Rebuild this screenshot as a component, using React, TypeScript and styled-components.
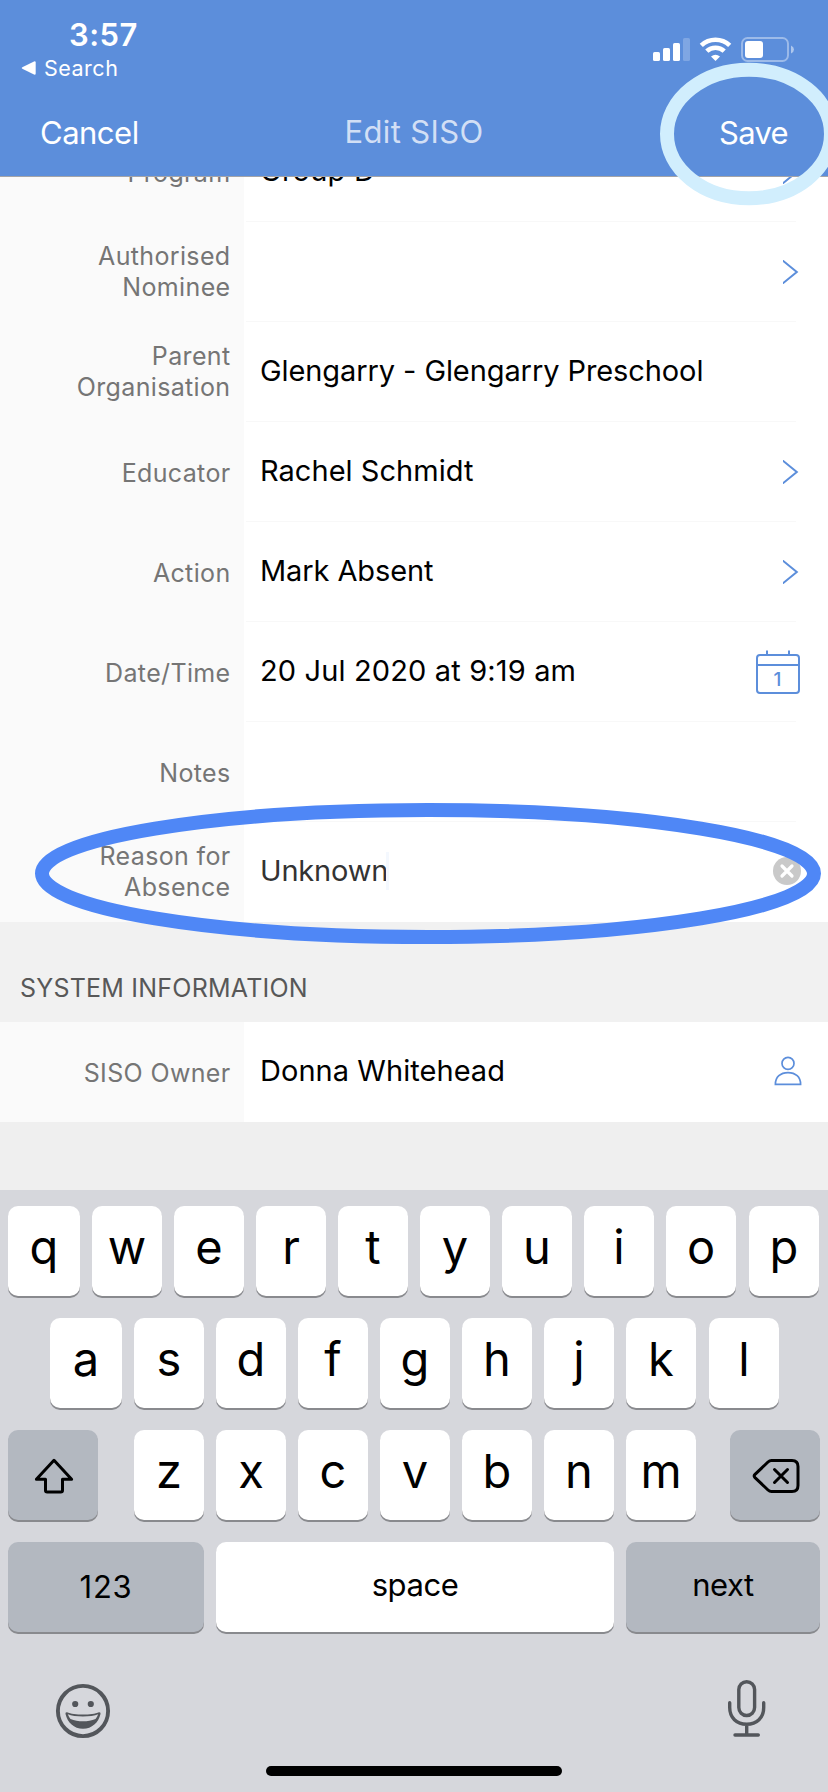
import React from 'react';
import styled, { createGlobalStyle, css } from 'styled-components';

const BLUE = '#5c8edb';

const GlobalStyle = createGlobalStyle`
  *, *::before, *::after { box-sizing: border-box; }
  body { margin: 0; }
  svg { display: block; flex: none; }
`;

const Screen = styled.div`
  position: relative;
  display: flex;
  flex-direction: column;
  width: 828px;
  height: 1792px;
  overflow: hidden;
  background: #efefef;
  font-family: Inter, "Liberation Sans", sans-serif;
  color: #000;
`;

/* Header */

const Header = styled.header`
  height: 177px;
  flex: none;
  display: flex;
  flex-direction: column;
  background: ${BLUE};
  border-bottom: 1px solid #a3a4a8;
  color: #fff;
`;

const StatusBar = styled.div`
  display: flex;
  justify-content: space-between;
  height: 90px;
  padding: 19px 32px 0 21px;
`;

const StatusLeft = styled.div`
  display: flex;
  flex-direction: column;
  gap: 3px;
`;

const Clock = styled.div`
  padding-left: 48px;
  font-size: 31px;
  font-weight: 570;
  line-height: 32px;
  letter-spacing: 0.5px;
`;

const BackLink = styled.div`
  display: flex;
  align-items: center;
  gap: 8px;
  font-size: 21.5px;
  line-height: 28px;
  letter-spacing: 0.5px;
`;

const StatusIcons = styled.svg`
  margin-top: 15px;
`;

const NavBar = styled.nav`
  display: grid;
  grid-template-columns: 1fr auto 1fr;
  align-items: center;
  flex: 1;
  padding: 0 40px;
  font-size: 31px;
  line-height: 38px;
`;

const NavAction = styled.span<{ $end?: boolean }>`
  justify-self: ${(p) => (p.$end ? 'end' : 'start')};
  letter-spacing: ${(p) => (p.$end ? '-0.7px' : '-0.5px')};
`;

const NavTitle = styled.span`
  padding-bottom: 2px;
  letter-spacing: 0.36px;
  color: #d2dff5;
`;

/* Form */

const Form = styled.main`
  flex: none;
  height: 1013px;
  overflow: hidden;
`;

const Scroller = styled.div`
  margin-top: -55px;
`;

const FieldRow = styled.div`
  display: grid;
  grid-template: 99px 1px / 244px 1fr;
  background: #fff;
`;

const FieldLabel = styled.div<{ $double?: boolean }>`
  grid-row: 1 / 3;
  display: flex;
  align-items: center;
  justify-content: flex-end;
  padding: ${(p) => (p.$double ? 0 : 3)}px 13.5px 0 0;
  background: #fafafa;
  color: #757575;
  font-size: 25px;
  line-height: 31px;
  letter-spacing: 0.35px;
  text-align: right;
  white-space: pre-line;
`;

const FieldValue = styled.div<{ $muted?: boolean }>`
  display: flex;
  align-items: center;
  justify-content: space-between;
  padding: 0 26px 0 16px;
  font-size: 29px;
  white-space: nowrap;
  color: ${(p) => (p.$muted ? '#333' : '#000')};
`;

const ValueText = styled.span<{ $spacing?: number }>`
  display: flex;
  align-items: center;
  padding-bottom: 2px;
  letter-spacing: ${(p) => p.$spacing ?? 0}px;
`;

const Caret = styled.span`
  width: 3px;
  height: 38px;
  margin-left: -2px;
  background: #f4f8fe;
`;

const Separator = styled.div`
  margin: 0 32px 0 2px;
  background: #f8f8f8;
`;

const SectionHeader = styled.h2`
  height: 100px;
  margin: 0;
  padding: 51px 0 0 20px;
  background: #f1f1f1;
  color: #585858;
  font-size: 25px;
  font-weight: 400;
  line-height: 30px;
  letter-spacing: 0.22px;
`;

/* Keyboard */

const Keyboard = styled.section`
  flex: 1;
  display: flex;
  flex-direction: column;
  padding-top: 16px;
  background: #d6d7dc;
`;

const KeyRows = styled.div`
  display: flex;
  flex-direction: column;
  gap: 22px;
`;

const KeyRow = styled.div<{ $inset?: boolean; $letters?: boolean }>`
  display: flex;
  gap: 12px;
  padding: ${(p) => (p.$inset ? '0 49px 0 50px' : p.$letters ? '0 9px 0 8px' : '0 8px')};
`;

const Key = styled.div<{ $width?: number; $tone?: 'dark'; $size?: 'label' }>`
  display: flex;
  align-items: center;
  justify-content: center;
  flex: none;
  width: ${(p) => p.$width ?? 70}px;
  height: 90px;
  border-radius: 10px;
  background: ${(p) => (p.$tone === 'dark' ? '#b3b8c0' : '#fff')};
  box-shadow: 0 2px 0 #898a8e;
  ${(p) =>
    p.$size === 'label'
      ? css`
          padding-bottom: 6px;
          font-size: 31px;
          letter-spacing: -0.42px;
        `
      : css`
          padding-bottom: 9px;
          font-size: 47px;
          font-weight: 375;
        `}
  &:last-child {
    margin-left: auto;
  }
`;

const NumbersKey = styled(Key)`
  padding-bottom: 2px;
  letter-spacing: 0.7px;
`;

const IconKey = styled(Key)`
  padding: 1px 0 0 1px;
`;

const MiddleKeys = styled.div`
  display: flex;
  gap: 12px;
  margin-left: 24px;
`;

const BottomBar = styled.div`
  display: flex;
  align-items: flex-start;
  justify-content: space-between;
  height: 64px;
  margin-top: 47px;
  padding: 0 61px 0 55px;
`;

const HomeIndicator = styled.div`
  width: 296px;
  height: 10px;
  margin: 23px auto 0;
  border-radius: 5px;
  background: #000;
`;

/* Highlight rings drawn over the screen */

const Ring = styled.svg<{ $x: number; $y: number }>`
  position: absolute;
  left: ${(p) => p.$x}px;
  top: ${(p) => p.$y}px;
  pointer-events: none;
`;

/* Icons */

const Chevron = () => (
  <svg width="19" height="24" viewBox="0 0 19 24" fill="none" stroke={BLUE} strokeWidth="2">
    <path d="M-2 -0.8L13.8 12L-2 24.8" />
  </svg>
);

const CalendarIcon = () => (
  <svg width="46" height="46" viewBox="0 0 46 46" fill="none" stroke={BLUE} strokeWidth="2">
    <rect x="1" y="6" width="42" height="38" rx="3" />
    <path d="M1 16H43M11 1.500V6M33 1.500V6" />
    <text
      x="21.5"
      y="36.5"
      textAnchor="middle"
      fill={BLUE}
      stroke="none"
      fontFamily="Inter, sans-serif"
      fontSize="19"
      fontWeight="500"
    >
      1
    </text>
  </svg>
);

const ClearIcon = () => (
  <svg width="29" height="30" viewBox="0 0 29 30">
    <circle cx="14" cy="14" r="14" fill="#c9c9c9" />
    <path d="M9 9L19 19M19 9L9 19" stroke="#fff" strokeWidth="3.2" strokeLinecap="round" />
  </svg>
);

const PersonIcon = () => (
  <svg width="28" height="32" viewBox="0 0 28 32" fill="none" stroke={BLUE} strokeWidth="1.7">
    <circle cx="14" cy="7.4" r="6" />
    <path d="M1.4 28.4C1.4 21 6.4 16.6 14 16.6C21.6 16.6 26.6 21 26.6 28.4Z" />
  </svg>
);

const ShiftIcon = () => (
  <svg width="40" height="36" viewBox="0 0 40 36" fill="none" stroke="#000" strokeWidth="3" strokeLinejoin="round">
    <path d="M20 2.3L37.6 21.3H28.5V32.3Q28.5 34 26.8 34H13.2Q11.5 34 11.5 32.3V21.3H2.4Z" />
  </svg>
);

const DeleteIcon = () => (
  <svg width="48" height="36" viewBox="0 0 48 36" fill="none" stroke="#000" strokeWidth="3" strokeLinejoin="round" strokeLinecap="round">
    <path d="M19.5 2.5H40Q46 2.5 46 8.5V27.5Q46 33.5 40 33.5H19.5Q17.6 33.5 16 32L3 19.6Q1.4 18 3 16.4L16 4Q17.6 2.5 19.5 2.5Z" />
    <path d="M22.5 11.5L35.5 24.5M35.5 11.5L22.5 24.5" />
  </svg>
);

const EmojiIcon = () => (
  <svg width="56" height="64" viewBox="0 0 56 64">
    <circle cx="28" cy="32" r="25.1" fill="none" stroke="#53565b" strokeWidth="3.9" />
    <circle cx="20.2" cy="25" r="3.1" fill="#53565b" />
    <circle cx="35.8" cy="25" r="3.1" fill="#53565b" />
    <path
      fill="#53565b"
      d="M12 33.2C19 36.3 37 36.3 44 33.2Q46 33 45.5 35C43.5 43.5 37 49.8 28 49.8C19 49.8 12.5 43.5 10.5 35Q10 33 12 33.2Z"
    />
    <path fill="#d6d7dc" d="M12.8 35.3C19.5 38.3 36.5 38.3 43.2 35.3Q42.2 38 40.5 39.9C33 43 23 43 15.5 39.9Q13.8 38 12.8 35.3Z" />
  </svg>
);

const MicIcon = () => (
  <svg width="40" height="60" viewBox="0 0 40 60" fill="none" stroke="#53565b" strokeWidth="3.4" strokeLinecap="round">
    <rect x="11.8" y="2.7" width="15.8" height="33.8" rx="7.9" />
    <path d="M2.7 23.8V28.5C2.7 38.6 9.6 45.3 19.7 45.3C29.8 45.3 36.7 38.6 36.7 28.5V23.8M19.7 45.3V55.5M8 56H31.3" />
  </svg>
);

type Field = {
  label: string;
  value?: string;
  spacing?: number;
  icon?: React.ReactNode;
  editing?: boolean;
};

const fields: Field[] = [
  { label: 'Program', value: 'Group D', spacing: 0.25, icon: <Chevron /> },
  { label: 'Authorised\nNominee', icon: <Chevron /> },
  { label: 'Parent\nOrganisation', value: 'Glengarry - Glengarry Preschool', spacing: -0.09 },
  { label: 'Educator', value: 'Rachel Schmidt', spacing: 0.03, icon: <Chevron /> },
  { label: 'Action', value: 'Mark Absent', spacing: -0.1, icon: <Chevron /> },
  { label: 'Date/Time', value: '20 Jul 2020 at 9:19 am', spacing: 0.14, icon: <CalendarIcon /> },
  { label: 'Notes' },
  { label: 'Reason for\nAbsence', value: 'Unknown', spacing: -0.2, icon: <ClearIcon />, editing: true },
];

const owner: Field = { label: 'SISO Owner', value: 'Donna Whitehead', spacing: 0.05, icon: <PersonIcon /> };

const FormField = ({ field, last }: { field: Field; last?: boolean }) => (
  <FieldRow>
    <FieldLabel $double={field.label.includes('\n')}>{field.label}</FieldLabel>
    <FieldValue $muted={field.editing}>
      <ValueText $spacing={field.spacing}>
        {field.value}
        {field.editing && <Caret />}
      </ValueText>
      {field.icon}
    </FieldValue>
    {!last && <Separator />}
  </FieldRow>
);

export default function App() {
  return (
    <Screen>
      <GlobalStyle />
      <Header>
        <StatusBar>
          <StatusLeft>
            <Clock>3:57</Clock>
            <BackLink>
              <svg width="15" height="14" viewBox="0 0 15 14">
                <path d="M1.3 6.3L13 0.4Q14.7 0 14.7 1.6V12.4Q14.7 14 13 13.6L1.3 7.7Q0 7 1.3 6.3Z" fill="#fff" />
              </svg>
              Search
            </BackLink>
          </StatusLeft>
          <StatusIcons width="146" height="30" viewBox="0 0 146 30" fill="#fff">
            <rect x="3" y="18" width="7" height="9" rx="1.6" />
            <rect x="13" y="14" width="7" height="13" rx="1.6" />
            <rect x="23" y="9" width="7" height="18" rx="1.6" />
            <rect x="33" y="4" width="7" height="23" rx="1.6" opacity="0.22" />
            <g fill="none" stroke="#fff" strokeWidth="4.6">
              <path d="M51.3 11.4A20.7 20.7 0 0 1 79.7 11.4" />
              <path d="M56.8 17.2A12.6 12.6 0 0 1 74.2 17.2" />
            </g>
            <path d="M61 22.4Q65.5 19 70 22.4L65.5 27Z" />
            <rect x="92" y="4" width="46" height="23" rx="5.5" fill="none" stroke="#fff" strokeWidth="1.9" opacity="0.4" />
            <rect x="95" y="7" width="18" height="17" rx="3" />
            <path d="M141 11.5Q144 13 144 15.5Q144 18 141 19.5Z" opacity="0.5" />
          </StatusIcons>
        </StatusBar>
        <NavBar>
          <NavAction>Cancel</NavAction>
          <NavTitle>Edit SISO</NavTitle>
          <NavAction $end>Save</NavAction>
        </NavBar>
      </Header>

      <Form>
        <Scroller>
          {fields.map((field, i) => (
            <FormField key={field.label} field={field} last={i === fields.length - 1} />
          ))}
          <SectionHeader>SYSTEM INFORMATION</SectionHeader>
          <FormField field={owner} last />
        </Scroller>
      </Form>

      <Keyboard>
        <KeyRows>
          <KeyRow $letters>
            {[...'qwertyuiop'].map((c, i) => (
              <Key key={c} $width={i === 0 ? 72 : 70}>{c}</Key>
            ))}
          </KeyRow>
          <KeyRow $inset>
            {[...'asdfghjkl'].map((c, i) => (
              <Key key={c} $width={i === 0 ? 72 : 70}>{c}</Key>
            ))}
          </KeyRow>
          <KeyRow>
            <IconKey $width={90} $tone="dark"><ShiftIcon /></IconKey>
            <MiddleKeys>
              {[...'zxcvbnm'].map((c) => (
                <Key key={c}>{c}</Key>
              ))}
            </MiddleKeys>
            <IconKey $width={90} $tone="dark"><DeleteIcon /></IconKey>
          </KeyRow>
          <KeyRow>
            <NumbersKey $width={196} $tone="dark" $size="label">123</NumbersKey>
            <Key $width={398} $size="label">space</Key>
            <Key $width={194} $tone="dark" $size="label">next</Key>
          </KeyRow>
        </KeyRows>
        <BottomBar>
          <EmojiIcon />
          <MicIcon />
        </BottomBar>
        <HomeIndicator />
      </Keyboard>

      <Ring $x={660} $y={62} width="178" height="144" viewBox="0 0 178 144">
        <ellipse cx="89" cy="72" rx="82" ry="64.2" fill="none" stroke="#d1eefd" strokeWidth="14" />
      </Ring>
      <Ring $x={35} $y={803} width="786" height="142" viewBox="0 0 786 142">
        <ellipse cx="393" cy="70.5" rx="386" ry="63.5" fill="none" stroke="#4f87f6" strokeWidth="14" />
      </Ring>
    </Screen>
  );
}
